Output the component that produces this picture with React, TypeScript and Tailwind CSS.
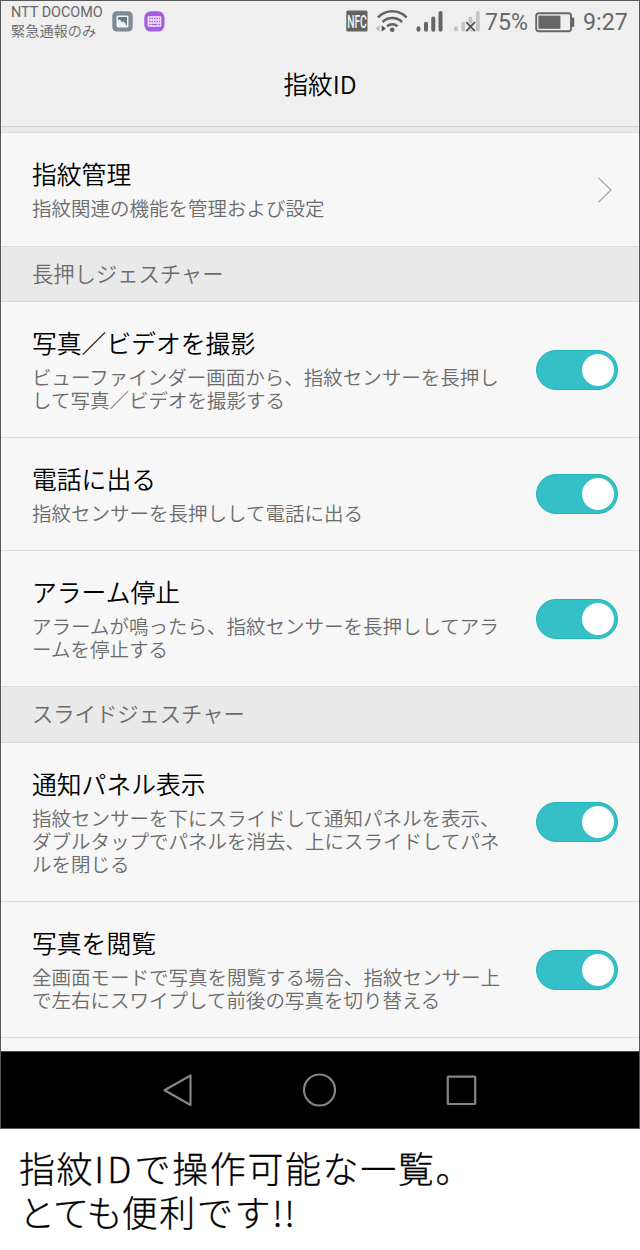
import clsx from "clsx";

type Item = {
  title: string;
  lines: string[];
  height: string;
  link?: boolean;
};

type Group = {
  heading?: string;
  headingHeight?: string;
  items: Item[];
};

const groups: Group[] = [
  {
    items: [
      {
        title: "指紋管理",
        lines: ["指紋関連の機能を管理および設定"],
        height: "h-[114px]",
        link: true,
      },
    ],
  },
  {
    heading: "長押しジェスチャー",
    headingHeight: "h-[55px]",
    items: [
      {
        title: "写真／ビデオを撮影",
        lines: [
          "ビューファインダー画面から、指紋センサーを長押し",
          "して写真／ビデオを撮影する",
        ],
        height: "h-[136px]",
      },
      {
        title: "電話に出る",
        lines: ["指紋センサーを長押しして電話に出る"],
        height: "h-[113px]",
      },
      {
        title: "アラーム停止",
        lines: [
          "アラームが鳴ったら、指紋センサーを長押ししてアラ",
          "ームを停止する",
        ],
        height: "h-[136px]",
      },
    ],
  },
  {
    heading: "スライドジェスチャー",
    headingHeight: "h-[56px]",
    items: [
      {
        title: "通知パネル表示",
        lines: [
          "指紋センサーを下にスライドして通知パネルを表示、",
          "ダブルタップでパネルを消去、上にスライドしてパネ",
          "ルを閉じる",
        ],
        height: "h-[159px]",
      },
      {
        title: "写真を閲覧",
        lines: [
          "全画面モードで写真を閲覧する場合、指紋センサー上",
          "で左右にスワイプして前後の写真を切り替える",
        ],
        height: "h-[136px]",
      },
    ],
  },
];

function StatusBar() {
  return (
    <div className="flex h-[42px] items-start justify-between pl-[10px] pr-[11px] text-[#676767]">
      <div className="flex">
        <div className="w-[101px] whitespace-nowrap pt-[2px] font-['Roboto','Noto_Sans_CJK_JP_DemiLight','Noto_Sans_CJK_JP',sans-serif] text-[14.4px] leading-[19px]">
          <div>NTT DOCOMO</div>
          <div className="text-[14.2px] leading-[18px]">緊急通報のみ</div>
        </div>
        <svg className="mt-[10px]" width="53" height="21" viewBox="0 0 53 21">
          <rect x="0.3" y="0.2" width="20.4" height="20.4" rx="4.5" fill="#7b8b97" />
          <rect x="5.3" y="5.2" width="10.4" height="10.6" rx="0.8" fill="#66798a" stroke="#f4f6f7" strokeWidth="1.5" />
          <path d="M6 9.6l1.8-1.3L10 11.4l1.6-1.2 3.6 5H6z" fill="#eef1f3" />
          <rect x="32.3" y="0.2" width="20.2" height="20.4" rx="6.5" fill="#a45fe0" />
          <rect x="35.6" y="5.2" width="13.6" height="10.6" rx="1" fill="#f3e6fc" />
          <path
            d="M37 7.5h11M37 10.5h11"
            stroke="#a45fe0"
            strokeWidth="1.5"
            strokeDasharray="1.6 0.9"
          />
          <path d="M37 13.5h1.6M39.5 13.5h6M46.4 13.5H48" stroke="#a45fe0" strokeWidth="1.5" />
        </svg>
      </div>
      <div className="flex font-['Roboto',sans-serif]">
        <svg className="mt-[8px]" width="134" height="26" viewBox="347 9 134 26">
          <rect x="347.3" y="10.6" width="21.2" height="21" rx="1.5" fill="#626262" />
          <text
            x="348.2"
            y="27.8"
            fontSize="18.5"
            fontWeight="500"
            fill="#f3f3f3"
            textLength="19.6"
            lengthAdjust="spacingAndGlyphs"
          >
            NFC
          </text>
          <g fill="none" stroke="#626262" strokeWidth="2.5">
            <path d="M379 17.5a19.7 19.7 0 0 1 28.6 0" />
            <path d="M383.5 22a13.8 13.8 0 0 1 19.6 0" />
            <path d="M388 26.3a7.8 7.8 0 0 1 10.6 0" />
          </g>
          <circle cx="393.2" cy="29.8" r="2.3" fill="#626262" />
          <path d="M380.6 25.2v6.6l-4.3-3.3z" fill="#bdbdbd" />
          <path d="M382.6 25.2v6.6l4.3-3.3z" fill="#555" />
          <g stroke="#666" strokeWidth="4" strokeLinecap="round">
            <path d="M419.5 28.2v1.5M427 23.7v6M434.3 18.5v11.2M441.5 13v16.7" />
          </g>
          <g stroke="#c5c5c5" strokeWidth="3.8" strokeLinecap="round">
            <path d="M457 28.2v1.5M464.3 23.7v6M471.5 18.5v11.2M478.8 13v16.7" />
          </g>
          <path d="M467.3 22.2l8.6 9M475.9 22.2l-8.6 9" stroke="#efefef" strokeWidth="3.4" />
          <path d="M467.3 22.2l8.6 9M475.9 22.2l-8.6 9" stroke="#555" strokeWidth="1.9" />
        </svg>
        <span className="ml-[5px] mt-[7px] w-[44px] whitespace-nowrap text-[23.2px] leading-[28px]">
          75%
        </span>
        <svg className="ml-[6px] mt-[11px]" width="40" height="21" viewBox="0 0 40 21">
          <rect x="1.2" y="1.2" width="34.8" height="18" rx="2.5" fill="none" stroke="#666" strokeWidth="1.9" />
          <rect x="3.4" y="3.6" width="22" height="13.2" fill="#666" />
          <path d="M36 5.5h2q1.2 0 1.2 1.2v7q0 1.2-1.2 1.2h-2z" fill="#666" />
        </svg>
        <span className="ml-[8px] mt-[7px] w-[45px] whitespace-nowrap text-[23.2px] leading-[28px]">
          9:27
        </span>
      </div>
    </div>
  );
}

function Toggle() {
  return (
    <button
      type="button"
      role="switch"
      aria-checked="true"
      className="flex h-10 w-[82px] shrink-0 items-center justify-end rounded-full border border-[#20b5ba] bg-[#34c0c6] pr-[3px]"
    >
      <span className="size-8 rounded-full bg-white" />
    </button>
  );
}

function Row({ item }: { item: Item }) {
  return (
    <div
      className={clsx(
        "flex items-center justify-between border-b border-[#dedede] pl-[31px] pr-[21px]",
        item.height
      )}
    >
      <div className="self-start whitespace-nowrap pt-[22px]">
        <div className="text-[24.8px] leading-9 text-black">{item.title}</div>
        <div className="mt-[5px] text-[19.5px] leading-[23px] text-[#6c6c6c]">
          {item.lines.map((line) => (
            <div key={line}>{line}</div>
          ))}
        </div>
      </div>
      {item.link ? (
        <svg className="mr-[6px]" width="14" height="26" viewBox="0 0 14 26" fill="none">
          <path d="M0.5 0.8L13 13 0.5 25.2" stroke="#9e9e9e" strokeWidth="1.1" />
        </svg>
      ) : (
        <Toggle />
      )}
    </div>
  );
}

function NavBar() {
  return (
    <div className="flex h-[77px] items-center justify-center border-t border-[#4d4d4d] bg-black">
      <svg width="318" height="36" viewBox="161 1072 318 36" fill="none" stroke="#858585" strokeWidth="2.2">
        <path d="M190.5 1075.5v29.5l-26-14.8z" strokeLinejoin="round" />
        <circle cx="319.5" cy="1090" r="15.5" />
        <rect x="447.8" y="1076.6" width="27.4" height="27.4" rx="0.8" />
      </svg>
    </div>
  );
}

export default function App() {
  return (
    <div className="h-[1250px] w-[640px] overflow-hidden bg-white font-['Noto_Sans_CJK_JP_DemiLight','Noto_Sans_CJK_JP',sans-serif]">
      <div className="flex h-[1129px] flex-col border border-[#57585a] bg-[#f7f7f7]">
        <header className="h-[126px] shrink-0 border-b border-[#d2d2d2] bg-[#efefef]">
          <StatusBar />
          <h1 className="text-center text-[24.6px] leading-[81px] text-black">指紋ID</h1>
        </header>
        <div className="h-[6px] shrink-0 border-b border-[#dedede] bg-[#e9e9e9]" />
        <main className="h-[918px] shrink-0 overflow-hidden">
          {groups.map((group, i) => (
            <section key={i}>
              {group.heading && (
                <h2
                  className={clsx(
                    "border-b border-[#dadada] bg-[#e9e9e9] pl-[31px] text-[21.3px] leading-[52px] text-[#6c6c6c]",
                    group.headingHeight
                  )}
                >
                  {group.heading}
                </h2>
              )}
              {group.items.map((item) => (
                <Row key={item.title} item={item} />
              ))}
            </section>
          ))}
        </main>
        <NavBar />
      </div>
      <p className="pl-[19px] pt-[16px] font-['Noto_Sans_CJK_JP',sans-serif] text-[36px] font-light leading-[44px] tracking-[1.6px] text-black [-webkit-text-stroke:0.3px_black]">
        指紋<span className="tracking-[3.2px]">ID</span>で操作可能な一覧。
        <br />
        <span className="tracking-[-0.8px]">とても</span>便利です!!
      </p>
    </div>
  );
}
